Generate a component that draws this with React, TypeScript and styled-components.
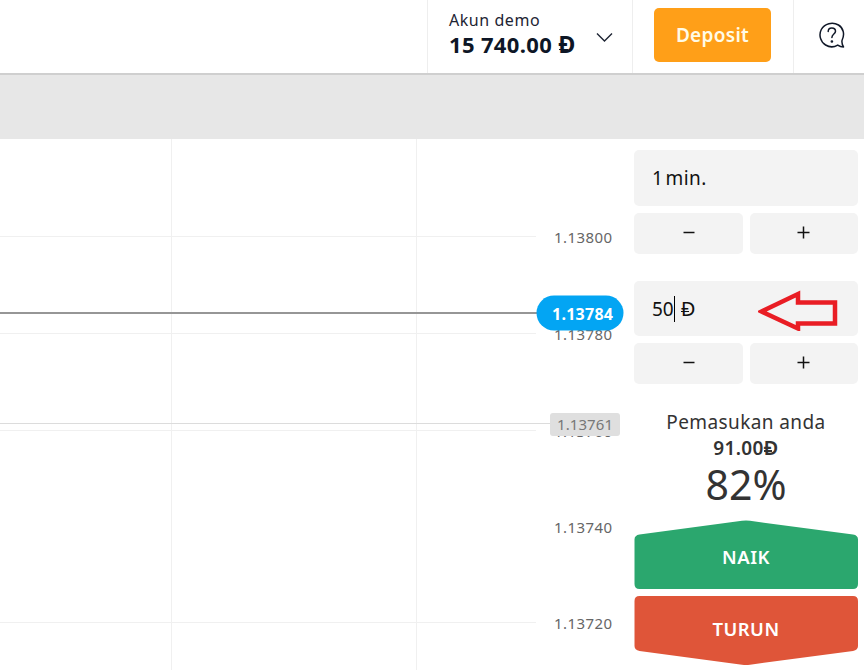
import React from "react";
import styled, { createGlobalStyle, css } from "styled-components";

const GlobalStyle = createGlobalStyle`
  *, *::before, *::after { box-sizing: border-box; }
  body { margin: 0; background: #fff; overflow: hidden; font-family: "Noto Sans", "Open Sans", sans-serif; color: #111; }
  button { font: inherit; border: 0; padding: 0; margin: 0; cursor: pointer; }
`;

const Page = styled.div`
  display: flex;
  flex-direction: column;
  width: 864px;
  height: 670px;
`;

const Header = styled.header`
  display: flex;
  justify-content: flex-end;
  height: 75px;
  border-bottom: 2px solid #cfcfcf;
`;

const Account = styled.div`
  display: flex;
  width: 205px;
  padding: 10px 19px 0 21px;
  border-left: 1px solid #eee;
  justify-content: space-between;
`;

const AccountName = styled.div`
  font-size: 16px;
  line-height: 20px;
  letter-spacing: 0.55px;
  color: #1d2433;
`;

const Balance = styled.div`
  height: 28px;
  font-size: 22px;
  line-height: 28px;
  font-weight: 700;
  letter-spacing: 0.35px;
  white-space: nowrap;
  color: #0d1626;
`;

const Chevron = styled.svg`
  flex: none;
  width: 18px;
  height: 12px;
  margin-top: 21px;
`;

const DepositCell = styled.div`
  width: 161px;
  padding: 8px 0 0 21px;
  border-left: 1px solid #eee;
`;

const DepositButton = styled.button`
  width: 117px;
  height: 54px;
  border-radius: 5px;
  background: #ff9f18;
  color: #fffbe6;
  font-size: 19px;
  font-weight: 600;
  letter-spacing: 0.3px;
`;

const HelpCell = styled.div`
  width: 71px;
  padding: 22px 0 0 24px;
  border-left: 1px solid #eee;
`;

const Band = styled.div`
  flex: none;
  height: 64px;
  background: #e7e7e7;
`;

const Main = styled.main`
  display: flex;
  height: 531px;
`;

const Chart = styled.svg`
  flex: none;
  display: block;
`;

const Sidebar = styled.aside`
  width: 224px;
  padding-top: 11px;
`;

const Field = styled.div<{ $tall?: boolean }>`
  display: flex;
  align-items: center;
  justify-content: space-between;
  height: ${(p) => (p.$tall ? 56 : 55)}px;
  padding: 0 20px 0 18px;
  border-radius: 5px;
  background: #f3f3f3;
  font-size: 19px;
`;

const Duration = styled.span`
  letter-spacing: 0.4px;
  word-spacing: -3px;
`;

const Amount = styled.span`
  display: flex;
  align-items: center;
`;

const Caret = styled.i`
  width: 1px;
  height: 26px;
  margin-right: 6px;
  background: #000;
`;

const Steps = styled.div<{ $gap: number }>`
  display: grid;
  grid-template-columns: 109px 108px;
  gap: 7px;
  height: 41px;
  margin: 7px 0 ${(p) => p.$gap}px;
`;

const StepButton = styled.button`
  display: flex;
  align-items: center;
  justify-content: center;
  padding-bottom: 1px;
  border-radius: 5px;
  background: #f3f3f3;
`;

const Payout = styled.section`
  height: 111px;
  text-align: center;
  color: #333;
`;

const PayoutTitle = styled.div`
  font-size: 19px;
  line-height: 26px;
  letter-spacing: 0.4px;
`;

const PayoutAmount = styled.div`
  font-size: 19px;
  line-height: 26px;
  font-weight: 600;
  letter-spacing: 0.3px;
`;

const PayoutRate = styled.div`
  height: 48px;
  font-size: 41px;
  line-height: 47px;
`;

const TradeButton = styled.button<{ $up?: boolean }>`
  position: relative;
  display: flex;
  justify-content: center;
  width: 224px;
  height: 70px;
  margin-bottom: 6px;
  background: none;
  color: #fff;
  font-size: 18.5px;
  font-weight: 600;
  line-height: 26px;
  ${(p) => (p.$up ? css`padding-top: 24px;` : css`padding-top: 20px;`)}
`;

const TradeShape = styled.svg`
  position: absolute;
  inset: 0;
`;

const TradeText = styled.span`
  position: relative;
  letter-spacing: 0.5px;
`;

/* The demo currency is a D crossed by two short bars. */
const Coin = styled.span<{ $thick?: boolean }>`
  position: relative;
  display: inline-block;
  font-size: 1.06em;
  line-height: 1;
  &::after {
    content: "";
    position: absolute;
    left: 0.02em;
    top: calc(50% + ${(p) => (p.$thick ? 0.17 : 0.14)}em);
    width: 0.38em;
    height: ${(p) => (p.$thick ? 1.5 : 1)}px;
    background: currentColor;
  }
`;

const levels = [
  { y: 97, text: "1.13800" },
  { y: 194, text: "1.13780" },
  { y: 291, text: "1.13760" },
  { y: 387, text: "1.13740" },
  { y: 483, text: "1.13720" },
];

function PriceChart() {
  return (
    <Chart width="634" height="531" viewBox="0 0 634 531">
      <g stroke="#f0f0f0" strokeWidth="1">
        <path d="M171.5 0V531M416.5 0V531" />
        {levels.map((l) => l.y !== 387 && <path key={l.y} d={`M0 ${l.y + 0.5}H536`} />)}
      </g>
      <g fontSize="15" fill="#666">
        {levels.map((l) => (
          <text key={l.y} x="554" y={l.y + 7} textLength="58">{l.text}</text>
        ))}
      </g>
      <path d="M0 284.5H550" stroke="#dcdcdc" />
      <rect x="550" y="274" width="70" height="23" rx="3" fill="#dfdfdf" />
      <text x="557" y="291" fontSize="15" textLength="56" fill="#777">1.13761</text>
      <path d="M0 174H537" stroke="#969696" strokeWidth="2" />
      <rect x="536.500" y="156.500" width="87" height="35" rx="17.500" fill="#03a5f3" />
      <text x="552" y="181" fontSize="16" fontWeight="700" textLength="61" fill="#fff">1.13784</text>
    </Chart>
  );
}

function Stepper({ gap }: { gap: number }) {
  return (
    <Steps $gap={gap}>
      <StepButton aria-label="-">
        <svg width="14" height="14" viewBox="0 0 14 14"><path d="M1.500 6.500H12.500" stroke="#111" strokeWidth="1.500" /></svg>
      </StepButton>
      <StepButton aria-label="+">
        <svg width="14" height="14" viewBox="0 0 14 14"><path d="M.5 6.500H12.500M6.500 .5V12.500" stroke="#111" strokeWidth="1.500" /></svg>
      </StepButton>
    </Steps>
  );
}

export default function App() {
  return (
    <Page>
      <GlobalStyle />
      <Header>
        <Account>
          <div>
            <AccountName>Akun demo</AccountName>
            <Balance>15 740.00 <Coin $thick>Đ</Coin></Balance>
          </div>
          <Chevron viewBox="0 0 18 12"><path d="M2 2.500L9.500 10L17 2.500" fill="none" stroke="#1d2433" strokeWidth="1.400" /></Chevron>
        </Account>
        <DepositCell><DepositButton>Deposit</DepositButton></DepositCell>
        <HelpCell>
          <svg width="28" height="27" viewBox="0 0 28 27" fill="none" stroke="#101828" strokeWidth="1.500" strokeLinejoin="round" strokeLinecap="round">
            <path d="M24 18.500C27 12.500 25.500 6 20.500 3C14.500-.6 6.500 1.500 3.300 7.500C.5 13 2.400 19.800 7.600 23C11.500 25.400 16 25.300 19.700 23.100C21.500 24.300 23.400 24.900 25.500 24.900C24.200 22.700 23.700 20.500 24 18.500Z" />
            <path d="M10.200 9.500C10.200 7 11.800 5.900 13.800 5.900C16 5.900 17.500 7.200 17.500 9.200C17.500 12 13.900 12 13.900 15.500" />
            <circle cx="13.900" cy="19.500" r=".6" fill="#101828" />
          </svg>
        </HelpCell>
      </Header>
      <Band />
      <Main>
        <PriceChart />
        <Sidebar>
          <Field $tall><Duration>1 min.</Duration></Field>
          <Stepper gap={27} />
          <Field>
            <Amount>50<Caret /><Coin>Đ</Coin></Amount>
            <svg width="80" height="44" viewBox="0 0 80 44">
              <path d="M5.500 25L42 7.500V16H79V37H42V42Z" transform="translate(-2 -0.500)" fill="none" stroke="#e91d24" strokeWidth="4.500" />
            </svg>
          </Field>
          <Stepper gap={25} />
          <Payout>
            <PayoutTitle>Pemasukan anda</PayoutTitle>
            <PayoutAmount>91.00<Coin $thick>Đ</Coin></PayoutAmount>
            <PayoutRate>82%</PayoutRate>
          </Payout>
          <TradeButton $up>
            <TradeShape width="224" height="70"><path d="M5.500 14.500L108 .8Q112 .1 116 .8L219 14.500Q224 15.300 224 19.500V64Q224 69 219 69H5.500Q.5 69 .5 64V19.500Q.5 15.300 5.500 14.500Z" fill="#2ba76e" /></TradeShape>
            <TradeText>NAIK</TradeText>
          </TradeButton>
          <TradeButton>
            <TradeShape width="224" height="70"><path d="M5.500 0H219Q224 0 224 5V50Q224 54 219 55L116 68.700Q112 69.400 108 68.700L5.500 55Q.5 54 .5 50V5Q.5 0 5.500 0Z" fill="#df5539" /></TradeShape>
            <TradeText>TURUN</TradeText>
          </TradeButton>
        </Sidebar>
      </Main>
    </Page>
  );
}
